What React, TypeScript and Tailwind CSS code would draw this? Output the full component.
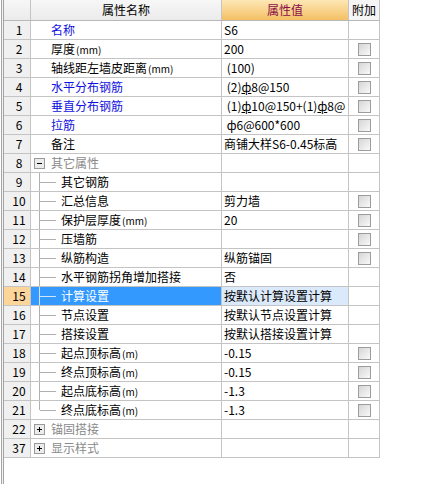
import React from 'react'

type Row = {
  n: string
  name: string
  value?: string
  blue?: boolean
  cb?: boolean
  group?: 'minus' | 'plus'
  child?: boolean
  last?: boolean
  selected?: boolean
  bar?: boolean
}

const rows: Row[] = [
  { n: '1', name: '名称', value: 'S6', blue: true },
  { n: '2', name: '厚度(mm)', value: '200', cb: true },
  { n: '3', name: '轴线距左墙皮距离(mm)', value: ' (100)', cb: true },
  { n: '4', name: '水平分布钢筋', value: ' (2)ф8@150', blue: true, cb: true, bar: true },
  { n: '5', name: '垂直分布钢筋', value: ' (1)ф10@150+(1)ф8@', blue: true, cb: true, bar: true },
  { n: '6', name: '拉筋', value: ' ф6@600*600', blue: true, cb: true },
  { n: '7', name: '备注', value: '商铺大样S6-0.45标高', cb: true },
  { n: '8', name: '其它属性', group: 'minus' },
  { n: '9', name: '其它钢筋', child: true },
  { n: '10', name: '汇总信息', value: '剪力墙', child: true, cb: true },
  { n: '11', name: '保护层厚度(mm)', value: '20', child: true, cb: true },
  { n: '12', name: '压墙筋', child: true, cb: true },
  { n: '13', name: '纵筋构造', value: '纵筋锚固', child: true, cb: true },
  { n: '14', name: '水平钢筋拐角增加搭接', value: '否', child: true },
  { n: '15', name: '计算设置', value: '按默认计算设置计算', child: true, selected: true },
  { n: '16', name: '节点设置', value: '按默认节点设置计算', child: true },
  { n: '17', name: '搭接设置', value: '按默认搭接设置计算', child: true },
  { n: '18', name: '起点顶标高(m)', value: '-0.15', child: true, cb: true },
  { n: '19', name: '终点顶标高(m)', value: '-0.15', child: true, cb: true },
  { n: '20', name: '起点底标高(m)', value: '-1.3', child: true, cb: true },
  { n: '21', name: '终点底标高(m)', value: '-1.3', child: true, cb: true, last: true },
  { n: '22', name: '锚固搭接', group: 'plus' },
  { n: '37', name: '显示样式', group: 'plus' }
]

const Checkbox = () => (
  <div className="w-[13px] h-[13px] border border-[#9c9c9c] bg-gradient-to-br from-[#d6d6d6] to-[#f9f9f9]" />
)

const ToggleBox = ({ kind }: { kind: 'minus' | 'plus' }) => (
  <div className="relative w-[11px] h-[11px] border border-[#9a9a9a] bg-[#ececec] shrink-0">
    <div className="absolute left-[2px] top-[4px] w-[5px] h-[1px] bg-black" />
    {kind === 'plus' && <div className="absolute left-[4px] top-[2px] w-[1px] h-[5px] bg-black" />}
  </div>
)

// unit suffix like (mm) is drawn smaller, as in the original grid
const Name = ({ text }: { text: string }) => {
  const m = text.match(/^(.*?)(\(m+\))$/)
  if (!m) return <>{text}</>
  return (
    <>
      {m[1]}
      <span className="text-[10px] ml-[1px]">{m[2]}</span>
    </>
  )
}

// renders the value text, giving the rebar grade symbol a foot bar where needed
const Value = ({ text, bar }: { text: string; bar?: boolean }) => {
  if (!bar) return <span className="whitespace-pre">{text}</span>
  const parts = text.split('ф')
  return (
    <span className="whitespace-pre">
      {parts.map((p, i) => (
        <React.Fragment key={i}>
          {i > 0 && <span className="underline underline-offset-[1px]">ф</span>}
          {p}
        </React.Fragment>
      ))}
    </span>
  )
}

export default function App() {
  return (
    <div
      className="w-[439px] h-[484px] bg-white flex text-[12px] text-black overflow-hidden"
      style={{ fontFamily: '"Noto Sans CJK SC", "Liberation Sans", sans-serif' }}
    >
      {/* left frame */}
      <div className="ml-[1px] w-[3px] h-full border-x border-[#a4a4a4] bg-[#f4f4f4] shrink-0" />

      <div className="flex flex-col">
        {/* header */}
        <div className="flex h-[21px] border-b border-[#b8b8b8]">
          <div className="w-[27px] border-r border-[#c4c4c4] bg-gradient-to-b from-[#f7f7f7] to-[#ebebeb]" />
          <div className="w-[191px] border-r border-[#c4c4c4] bg-gradient-to-b from-[#f7f7f7] to-[#ebebeb] flex items-center justify-center">
            属性名称
          </div>
          <div className="w-[127px] border-r border-[#c4c4c4] bg-gradient-to-b from-[#fde7b4] to-[#f4c063] flex items-center justify-center text-[#8a0c4a]">
            属性值
          </div>
          <div className="w-[31px] border-r border-[#c4c4c4] bg-[#f5f5f5] flex items-center justify-center">
            附加
          </div>
        </div>

        {rows.map((r) => (
          <div key={r.n} className="flex h-[19px] border-b border-[#c4c4c4]">
            <div
              className={`w-[27px] border-r border-[#c4c4c4] flex items-center justify-center pl-[4px] ${
                r.selected ? 'bg-[#fcd59b]' : 'bg-[#f0f0f0]'
              }`}
            >
              {r.n}
            </div>

            <div
              className={`w-[191px] border-r border-[#c4c4c4] flex items-center whitespace-nowrap overflow-hidden ${
                r.selected ? 'bg-[#3399ff] text-white' : r.blue ? 'text-[#1010e0]' : r.group ? 'text-[#8a8a8a]' : ''
              }`}
            >
              {r.group ? (
                <>
                  <div className="ml-[3px] mr-[6px]">
                    <ToggleBox kind={r.group} />
                  </div>
                  {r.name}
                </>
              ) : r.child ? (
                <>
                  <div className="relative w-[30px] h-full shrink-0">
                    <div
                      className={`absolute left-[8px] top-0 w-[1px] ${r.last ? 'h-[9px]' : 'h-full'} ${
                        r.selected ? 'bg-[#cfe4ff]' : 'bg-[#b0b0b0]'
                      }`}
                    />
                    <div
                      className={`absolute left-[9px] top-[9px] w-[16px] h-[1px] ${
                        r.selected ? 'bg-[#cfe4ff]' : 'bg-[#b0b0b0]'
                      }`}
                    />
                  </div>
                  <Name text={r.name} />
                </>
              ) : (
                <span className="pl-[20px]">
                  <Name text={r.name} />
                </span>
              )}
            </div>

            <div
              className={`w-[127px] border-r border-[#c4c4c4] flex items-center pl-[2px] whitespace-nowrap overflow-hidden ${
                r.selected ? 'bg-[#dbeafb]' : ''
              }`}
            >
              {r.value && <Value text={r.value} bar={r.bar} />}
            </div>

            <div className="w-[31px] border-r border-[#c4c4c4] flex items-center justify-center">
              {r.cb && <Checkbox />}
            </div>
          </div>
        ))}
      </div>
    </div>
  )
}
